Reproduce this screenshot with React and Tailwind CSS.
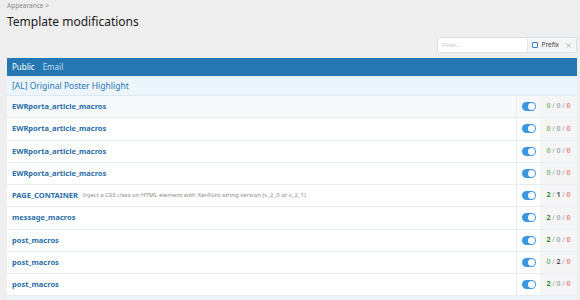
import { X } from 'lucide-react'

const rows = [
  { title: 'EWRporta_article_macros', counts: [0, 0, 0], hover: true },
  { title: 'EWRporta_article_macros', counts: [0, 0, 0] },
  { title: 'EWRporta_article_macros', counts: [0, 0, 0] },
  { title: 'EWRporta_article_macros', counts: [0, 0, 0] },
  {
    title: 'PAGE_CONTAINER',
    hint: 'Inject a CSS class on HTML element with XenForo string version (v_2_0 or v_2_1)',
    counts: [2, 1, 0],
  },
  { title: 'message_macros', counts: [2, 0, 0] },
  { title: 'post_macros', counts: [2, 0, 0] },
  { title: 'post_macros', counts: [0, 2, 0] },
  { title: 'post_macros', counts: [2, 0, 0] },
]

function Toggle() {
  return (
    <span className="relative inline-block w-[14px] h-[9px] rounded-full bg-[#3d97e0]">
      <span className="absolute right-[1px] top-[1px] w-[7px] h-[7px] rounded-full bg-white" />
    </span>
  )
}

function Counts({ counts }) {
  const [ok, edited, failed] = counts
  return (
    <span className="text-[7px] font-bold">
      <span className={ok ? 'text-[#2e8b2e]' : 'text-[#88c088]'}>{ok}</span>
      <span className="text-[#c4c4c4] mx-[1.5px]">/</span>
      <span className={edited ? 'text-[#555]' : 'text-[#b0b0b0]'}>{edited}</span>
      <span className="text-[#c4c4c4] mx-[1.5px]">/</span>
      <span className={failed ? 'text-[#d03030]' : 'text-[#ef8c8c]'}>{failed}</span>
    </span>
  )
}

export default function App() {
  return (
    <div className="w-[580px] h-[300px] overflow-hidden bg-[#eeeeee] font-['Noto_Sans',sans-serif] text-[#141414]">
      <div className="pl-[7px] pt-[1px] text-[6.5px] text-[#8a8a8a] leading-[10px]">Appearance &gt;</div>
      <h1 className="pl-[7px] mt-[3px] text-[12px] leading-[16px] text-[#1a1a1a]">Template modifications</h1>

      {/* filter */}
      <div className="flex justify-end mt-[7px] pr-[3px]">
        <div className="flex h-[16px] w-[140px] border border-[#dcdfe3] rounded-[3px] bg-white overflow-hidden">
          <div className="flex-1 pl-[4px] text-[6px] leading-[14px] text-[#c8c8c8]">Filter...</div>
          <div className="flex items-center gap-[3px] px-[4px] bg-[#f4f6f8] border-l border-[#e2e5e8] text-[6.5px] text-[#444]">
            <span className="w-[6px] h-[6px] border border-[#3d80c0] rounded-[1px] bg-white" />
            Prefix
            <X size={7} strokeWidth={2} className="ml-[3px] text-[#888]" />
          </div>
        </div>
      </div>

      <div className="mx-[7px] mt-[5px] w-[570px]">
        <div className="flex h-[18px] bg-[#2577b1] items-center gap-[8px] pl-[5px] text-[8px]">
          <span className="text-white">Public</span>
          <span className="text-[#c6def2]">Email</span>
        </div>
        <div className="h-[20px] border-t border-[#e3eef8] bg-[#edf5fc] border-b border-b-[#dde8f2] pl-[5px] text-[8.5px] leading-[18px] text-[#2577b1]">
          [AL] Original Poster Highlight
        </div>
        {rows.map((r, i) => (
          <div
            key={i}
            className={`flex h-[22.25px] border-b border-[#e7ecf1] ${r.hover ? 'bg-[#f6f8fa]' : 'bg-white'}`}
          >
            <div className="flex-1 flex items-center pl-[5px] min-w-0 whitespace-nowrap">
              <span className="text-[7.5px] font-bold text-[#2a6ea6]">{r.title}</span>
              {r.hint && <span className="ml-[5px] text-[6px] text-[#8c8c8c]">{r.hint}</span>}
            </div>
            <div className="w-[24px] flex items-center justify-center border-l border-[#e7ecf1]">
              <Toggle />
            </div>
            <div className="w-[37px] flex items-center justify-center bg-[#f5f5f5]">
              <Counts counts={r.counts} />
            </div>
          </div>
        ))}
        <div className="h-[10px] bg-[#edf5fc]" />
      </div>
    </div>
  )
}
